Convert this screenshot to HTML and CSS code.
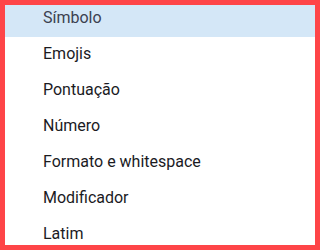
FILE: index.html
```html
<!DOCTYPE html>
<html>
<head>
<meta charset="utf-8">
<link rel="stylesheet" href="styles.css">
</head>
<body>
<div class="frame">
  <ul class="list">
    <li class="item active">Símbolo</li>
    <li class="item">Emojis</li>
    <li class="item">Pontuação</li>
    <li class="item">Número</li>
    <li class="item">Formato e whitespace</li>
    <li class="item">Modificador</li>
    <li class="item">Latim</li>
  </ul>
</div>
</body>
</html>
```
FILE: styles.css
```css
html, body {
  margin: 0;
  padding: 0;
  background: #ffffff;
}
.frame {
  box-sizing: border-box;
  width: 320px;
  height: 250px;
  border: 5px solid #fe4548;
  overflow: hidden;
  background: #ffffff;
}
.list {
  list-style: none;
  margin: -4px 0 0 0;
  padding: 0;
}
.item {
  box-sizing: border-box;
  height: 36px;
  display: flex;
  align-items: center;
  padding: 0 0 4px 38px;
  font-family: Roboto, "Liberation Sans", sans-serif;
  font-size: 16px;
  color: #1b1b1f;
}
.item.active {
  background: #d4e7f7;
  color: #3c4150;
}
```
